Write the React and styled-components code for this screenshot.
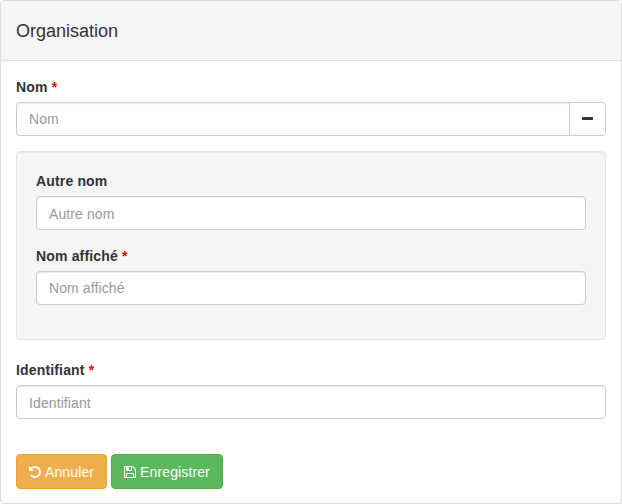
import styled, { createGlobalStyle, css } from "styled-components"

const GlobalStyle = createGlobalStyle`
  *,
  *::before,
  *::after {
    box-sizing: border-box;
  }

  body {
    margin: 0;
    background: #fff;
    color: #333;
    font-family: "Liberation Sans", Arial, sans-serif;
    font-size: 14px;
    line-height: 20px;
  }
`

const Panel = styled.form`
  display: flex;
  flex-direction: column;
  height: 504px;
  border: 1px solid #ddd;
  border-radius: 4px;
  box-shadow: 0 1px 1px rgba(0, 0, 0, 0.05);
`

const PanelHeading = styled.header`
  padding: 20px 15px;
  height: 60px;
  background: #f5f5f5;
  border-bottom: 1px solid #ddd;
  border-radius: 3px 3px 0 0;
`

const PanelTitle = styled.h3`
  margin: 0;
  font-size: 18px;
  font-weight: 500;
  line-height: 20px;
`

const PanelBody = styled.div`
  padding: 16px 15px 15px;
`

const FormGroup = styled.div`
  margin-bottom: 15px;
`

const Label = styled.label`
  display: block;
  margin-bottom: 5px;
  font-weight: 700;
  letter-spacing: 0.16px;
`

const Required = styled.span`
  color: #f00;
`

const InputGroup = styled.div`
  display: flex;
`

const Input = styled.input`
  display: block;
  flex: 1;
  width: 100%;
  min-width: 0;
  height: 34px;
  padding: ${(props) => (props.$lowered ? "7px 12px 5px" : "6px 12px")};
  color: #555;
  font-family: inherit;
  font-size: 14px;
  line-height: 20px;
  letter-spacing: 0.1px;
  background: #fff;
  border: 1px solid #ccc;
  border-radius: ${(props) => (props.$grouped ? "4px 0 0 4px" : "4px")};
  box-shadow: inset 0 1px 1px rgba(0, 0, 0, 0.075);

  &::placeholder {
    color: #999;
    opacity: 1;
  }

  &:focus {
    outline: none;
    border-color: #66afe9;
  }
`

const Well = styled.div`
  padding: 19px;
  margin-bottom: 20px;
  background: #f5f5f5;
  border: 1px solid #e3e3e3;
  border-radius: 4px;
  box-shadow: inset 0 1px 1px rgba(0, 0, 0, 0.05);

  ${FormGroup} + ${FormGroup} {
    margin-top: 16px;
  }
`

const Actions = styled.div`
  display: flex;
  gap: 4px;
  margin-top: 35px;
`

const variants = {
  default: css`
    width: 37px;
    margin-left: -1px;
    padding: 6px 0;
    color: #333;
    background: #fff;
    border-color: #ccc;
    border-radius: 0 4px 4px 0;
  `,
  warning: css`
    color: #fff;
    background: #f0ad4e;
    border-color: #eea236;
  `,
  success: css`
    color: #fff;
    background: #5cb85c;
    border-color: #4cae4c;
  `,
}

const Button = styled.button`
  display: flex;
  align-items: center;
  justify-content: center;
  gap: 4px;
  height: ${(props) => (props.$variant === "default" ? "34px" : "35px")};
  padding: 6px 12px;
  font-family: inherit;
  font-size: 14px;
  line-height: 20px;
  letter-spacing: 0.12px;
  white-space: nowrap;
  border: 1px solid transparent;
  border-radius: 4px;
  cursor: pointer;
  ${(props) => variants[props.$variant]}
`

const Svg = styled.svg`
  display: block;
  height: 14px;
  fill: currentColor;
`

const icons = {
  minus: {
    width: 1408,
    path: "M1408 736v192q0 40-28 68t-68 28h-1216q-40 0-68-28t-28-68v-192q0-40 28-68t68-28h1216q40 0 68 28t28 68z",
  },
  undo: {
    width: 1536,
    path: "M1536 896q0 156-61 298t-164 245-245 164-298 61q-172 0-327-72.5t-264-204.5q-7-10-6.5-22.5t8.5-20.5l137-138q10-9 25-9 16 2 23 12 73 95 179 147t225 52q104 0 198.5-40.5t163.5-109.5 109.5-163.5 40.5-198.5-40.5-198.5-109.5-163.5-163.5-109.5-198.5-40.5q-98 0-188 35.5t-160 101.5l137 138q31 30 14 69-17 40-59 40h-448q-26 0-45-19t-19-45v-448q0-42 40-59 39-17 69 14l130 129q107-101 244.5-156.5t284.5-55.5q156 0 298 61t245 164 164 245 61 298z",
  },
  save: {
    width: 1536,
    path: "M384 1536h768v-384h-768v384zm896 0h128v-896q0-14-10-38.500t-20-34.500l-281-281q-10-10-34-20t-39-10v416q0 40-28 68t-68 28h-576q-40 0-68-28t-28-68v-416h-128v1280h128v-416q0-40 28-68t68-28h832q40 0 68 28t28 68v416zm-384-928v-320q0-13-9.500-22.500t-22.500-9.500h-192q-13 0-22.500 9.500t-9.500 22.500v320q0 13 9.500 22.500t22.500 9.500h192q13 0 22.500-9.500t9.500-22.500zm640 32v928q0 40-28 68t-68 28h-1344q-40 0-68-28t-28-68v-1344q0-40 28-68t68-28h928q40 0 88 20t76 48l280 280q28 28 48 76t20 88z",
  },
}

const Icon = ({ name }) => (
  <Svg viewBox={`0 0 ${icons[name].width} 1792`} aria-hidden="true">
    <path d={icons[name].path} />
  </Svg>
)

const Field = ({ id, label, required, lowered, addon }) => (
  <FormGroup>
    <Label htmlFor={id}>
      {label} {required && <Required>*</Required>}
    </Label>
    <InputGroup>
      <Input id={id} type="text" placeholder={label} $grouped={Boolean(addon)} $lowered={lowered} />
      {addon}
    </InputGroup>
  </FormGroup>
)

const App = () => (
  <>
    <GlobalStyle />
    <Panel onSubmit={(e) => e.preventDefault()}>
      <PanelHeading>
        <PanelTitle>Organisation</PanelTitle>
      </PanelHeading>
      <PanelBody>
        <Field
          id="name"
          label="Nom"
          required
          addon={
            <Button type="button" $variant="default">
              <Icon name="minus" />
            </Button>
          }
        />
        <Well>
          <Field id="otherName" label="Autre nom" lowered />
          <Field id="displayName" label="Nom affiché" required />
        </Well>
        <Field id="identifier" label="Identifiant" required lowered />
        <Actions>
          <Button type="reset" $variant="warning">
            <Icon name="undo" />
            Annuler
          </Button>
          <Button type="submit" $variant="success">
            <Icon name="save" />
            Enregistrer
          </Button>
        </Actions>
      </PanelBody>
    </Panel>
  </>
)

export default App
